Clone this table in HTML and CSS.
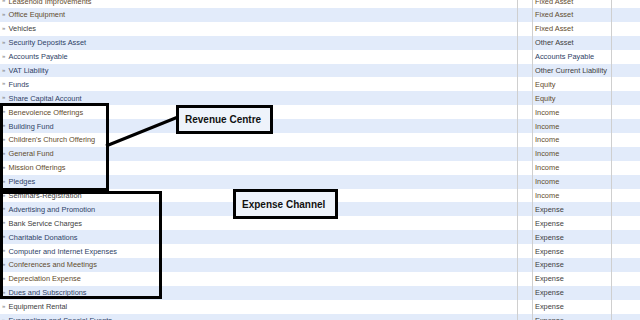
FILE: index.html
```html
<!DOCTYPE html>
<html>
<head>
<meta charset="utf-8">
<link rel="stylesheet" href="styles.css">
</head>
<body>
<div class="page">
  <div class="sheet">
    <div class="row"><div class="name c-br">Leasehold Improvements</div><div class="gap"></div><div class="type c-br">Fixed Asset</div><div class="tail"></div></div>
    <div class="row"><div class="name c-br">Office Equipment</div><div class="gap"></div><div class="type c-br">Fixed Asset</div><div class="tail"></div></div>
    <div class="row"><div class="name c-dk">Vehicles</div><div class="gap"></div><div class="type c-br">Fixed Asset</div><div class="tail"></div></div>
    <div class="row"><div class="name c-bl">Security Deposits Asset</div><div class="gap"></div><div class="type c-dk">Other Asset</div><div class="tail"></div></div>
    <div class="row"><div class="name c-bl">Accounts Payable</div><div class="gap"></div><div class="type c-bl">Accounts Payable</div><div class="tail"></div></div>
    <div class="row"><div class="name c-bl">VAT Liability</div><div class="gap"></div><div class="type c-dk">Other Current Liability</div><div class="tail"></div></div>
    <div class="row"><div class="name c-bl">Funds</div><div class="gap"></div><div class="type c-br">Equity</div><div class="tail"></div></div>
    <div class="row"><div class="name c-bl">Share Capital Account</div><div class="gap"></div><div class="type c-br">Equity</div><div class="tail"></div></div>
    <div class="row"><div class="name c-br">Benevolence Offerings</div><div class="gap"></div><div class="type c-br">Income</div><div class="tail"></div></div>
    <div class="row"><div class="name c-bl">Building Fund</div><div class="gap"></div><div class="type c-br">Income</div><div class="tail"></div></div>
    <div class="row"><div class="name c-br">Children's Church Offering</div><div class="gap"></div><div class="type c-br">Income</div><div class="tail"></div></div>
    <div class="row"><div class="name c-br">General Fund</div><div class="gap"></div><div class="type c-br">Income</div><div class="tail"></div></div>
    <div class="row"><div class="name c-br">Mission Offerings</div><div class="gap"></div><div class="type c-br">Income</div><div class="tail"></div></div>
    <div class="row"><div class="name c-bl">Pledges</div><div class="gap"></div><div class="type c-br">Income</div><div class="tail"></div></div>
    <div class="row"><div class="name c-dk">Seminars-Registration</div><div class="gap"></div><div class="type c-br">Income</div><div class="tail"></div></div>
    <div class="row"><div class="name c-bl">Advertising and Promotion</div><div class="gap"></div><div class="type c-dk">Expense</div><div class="tail"></div></div>
    <div class="row"><div class="name c-dk">Bank Service Charges</div><div class="gap"></div><div class="type c-dk">Expense</div><div class="tail"></div></div>
    <div class="row"><div class="name c-bl">Charitable Donations</div><div class="gap"></div><div class="type c-dk">Expense</div><div class="tail"></div></div>
    <div class="row"><div class="name c-bl">Computer and Internet Expenses</div><div class="gap"></div><div class="type c-dk">Expense</div><div class="tail"></div></div>
    <div class="row"><div class="name c-br">Conferences and Meetings</div><div class="gap"></div><div class="type c-dk">Expense</div><div class="tail"></div></div>
    <div class="row"><div class="name c-br">Depreciation Expense</div><div class="gap"></div><div class="type c-dk">Expense</div><div class="tail"></div></div>
    <div class="row"><div class="name c-bl">Dues and Subscriptions</div><div class="gap"></div><div class="type c-dk">Expense</div><div class="tail"></div></div>
    <div class="row"><div class="name c-dk">Equipment Rental</div><div class="gap"></div><div class="type c-dk">Expense</div><div class="tail"></div></div>
    <div class="row"><div class="name c-bl">Evangelism and Special Events</div><div class="gap"></div><div class="type c-dk">Expense</div><div class="tail"></div></div>
  </div>

  <div class="frame frame-revenue"></div>
  <div class="frame frame-expense"></div>
  <svg class="connector" width="640" height="320" viewBox="0 0 640 320">
    <line x1="106" y1="146" x2="178" y2="117" stroke="#000" stroke-width="3"/>
  </svg>
  <div class="label label-revenue">Revenue Centre</div>
  <div class="label label-expense">Expense Channel</div>
</div>
</body>
</html>
```

FILE: styles.css
```css
html, body {
  margin: 0;
  padding: 0;
  background: #fff;
}
body {
  width: 640px;
  height: 320px;
  overflow: hidden;
  font-family: "Liberation Sans", Arial, sans-serif;
}
.page {
  position: relative;
  width: 640px;
  height: 320px;
  overflow: hidden;
}
.sheet {
  margin-top: -5.9px;
  display: flex;
  flex-direction: column;
}
.row {
  display: grid;
  grid-template-columns: 517px 15px 79px 1fr;
  height: 13.9px;
  background: #fff;
}
.row:nth-child(even) {
  background: #e2ebfa;
}
.row > div {
  display: flex;
  align-items: center;
  font-size: 7.4px;
  white-space: nowrap;
  overflow: hidden;
}
.name {
  padding-left: 8.5px;
  position: relative;
}
.name::before {
  content: "»";
  position: absolute;
  left: 2px;
  top: 3px;
  font-size: 6px;
  color: #777;
}
.gap, .type, .tail {
  border-left: 1px solid #cfcfcf;
}
.type {
  padding-left: 2px;
}
.c-dk { color: #3c3c3c; }
.c-br { color: #5f4b2c; }
.c-bl { color: #2e4266; }

.frame {
  position: absolute;
  border: 3px solid #000;
  box-sizing: border-box;
}
.frame-revenue {
  left: 0px;
  top: 103px;
  width: 109px;
  height: 88px;
}
.frame-expense {
  left: 0px;
  top: 191px;
  width: 162px;
  height: 108px;
}
.connector {
  position: absolute;
  left: 0;
  top: 0;
}
.label {
  position: absolute;
  box-sizing: border-box;
  border: 3px solid #000;
  background: #eef3fb;
  font-weight: bold;
  font-size: 10px;
  color: #111;
  padding-left: 6px;
  display: flex;
  align-items: center;
}
.label-revenue {
  left: 176px;
  top: 105px;
  width: 97px;
  height: 29px;
}
.label-expense {
  left: 233px;
  top: 189px;
  width: 105px;
  height: 30px;
}
```
